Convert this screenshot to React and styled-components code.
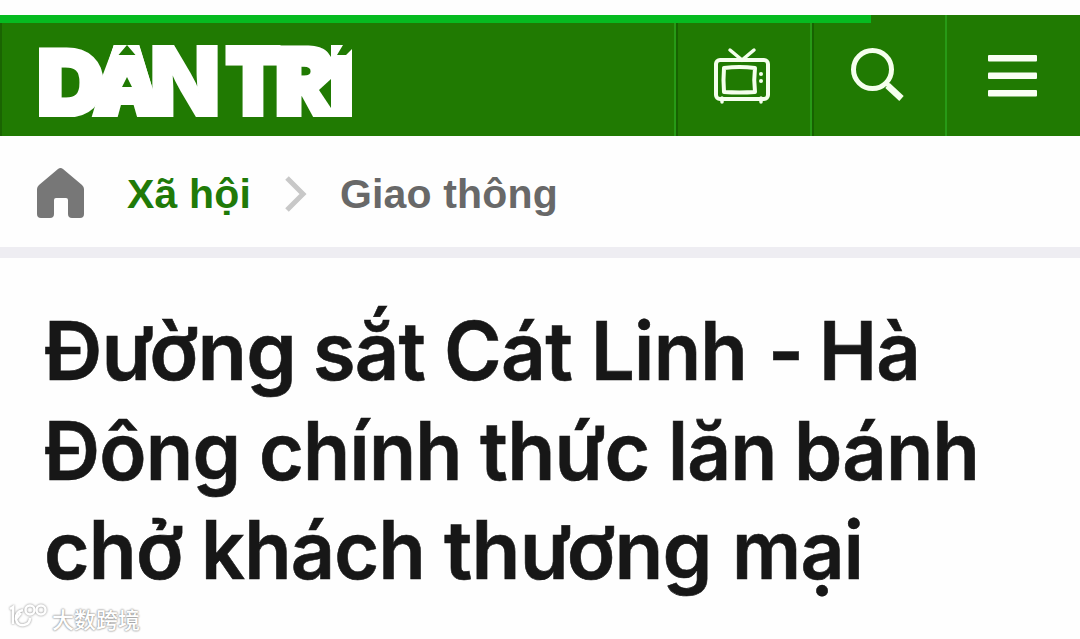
import styled, { createGlobalStyle } from "styled-components";

const GlobalStyle = createGlobalStyle`
  * {
    box-sizing: border-box;
  }
  body {
    margin: 0;
    background: #fefefe;
    overflow: hidden;
  }
`;

const Page = styled.div`
  position: relative;
  width: 1080px;
  height: 639px;
  padding-top: 15px;
  overflow: hidden;
`;
const Header = styled.header`
  position: relative;
  display: flex;
  height: 121px;
  background: #207a02;
  border-left: 2px solid #1a6402;
`;
const Progress = styled.div`
  position: absolute;
  top: 0;
  left: -2px;
  width: 871px;
  height: 8px;
  background: #06bb20;
`;
const LogoLink = styled.div`
  flex: 1;
  padding: 29px 0 0 36px;
`;
const HeaderButton = styled.div`
  display: flex;
  width: ${({ $width }) => $width}px;
  padding-top: ${({ $top }) => $top}px;
  padding-left: ${({ $left }) => $left}px;
  border-left: 2px solid #279a16;
  box-shadow: ${({ $shadow }) => ($shadow ? "inset 2px 0 #176201" : "none")};
`;
const Breadcrumb = styled.nav`
  display: flex;
  height: 122px;
  padding: 32px 0 0 37px;
  border-bottom: 11px solid #eeedf2;
  font: bold 41px/52px "Liberation Sans", Arial, sans-serif;
  letter-spacing: 0.15px;
  white-space: nowrap;
`;
const Crumb = styled.span`
  width: ${({ $width }) => $width}px;
  color: ${({ $active }) => ($active ? "#207a08" : "#686868")};
`;
const HomeIcon = styled.svg`
  margin-right: 43px;
`;
const Chevron = styled.svg`
  margin: 8px 33px 0 0;
`;
const Title = styled.h1`
  margin: 43px 0 0 43.5px;
  color: #171717;
  font: 600 80.5px/99.5px Inter, sans-serif;
  letter-spacing: -0.8px;
  -webkit-text-stroke: 0.6px #171717;
  white-space: nowrap;
`;
const Line = styled.span`
  display: flex;
`;
const Word = styled.span`
  width: ${({ $width }) => $width}px;
  transform: scaleX(${({ $scale }) => $scale});
  transform-origin: left;
`;
const Watermark = styled.div`
  position: absolute;
  left: 8px;
  top: 601px;
  display: flex;
  color: #fff;
  font: 500 22px/34px "Noto Sans CJK SC", sans-serif;
  text-shadow: 0 0 2px #888, 0 0 2px #999;
`;
const WatermarkIcon = styled.svg`
  margin-right: 4px;
  filter: drop-shadow(0 0 1px #888);
`;

const letters = [
  { char: "D", x: 36, width: 68, cap: 70, stroke: 5 },
  { char: "N", x: 149, width: 72, cap: 72, stroke: 2 },
  { char: "T", x: 226, width: 54, cap: 72, stroke: 6 },
  { char: "R", x: 276, width: 60, cap: 72, stroke: 7 },
  { char: "Í", x: 326, width: 31, cap: 72, stroke: 0 },
];

const title = [
  [
    ["Đường", 269, 1.005],
    ["sắt", 131, 0.963],
    ["Cát", 147, 0.973],
    ["Linh", 177, 0.964],
    ["-", 51, 0.96],
    ["Hà", 110, 0.966],
  ],
  [
    ["Đông", 215, 0.965],
    ["chính", 221, 0.957],
    ["thức", 188, 0.977],
    ["lăn", 126, 0.95],
    ["bánh", 200, 0.962],
  ],
  [
    ["chở", 157, 0.972],
    ["khách", 243, 0.959],
    ["thương", 288, 0.993],
    ["mại", 140, 0.954],
  ],
];

const LogoLetter = ({ char, x, width, cap, stroke }) => (
  <text
    x={x}
    y={117 - stroke / 2}
    fontSize={(cap - stroke) / 0.727}
    strokeWidth={stroke}
    textLength={width}
    lengthAdjust="spacingAndGlyphs"
  >
    {char}
  </text>
);

const Logo = () => (
  <svg width="316" height="74" viewBox="38 44 316 74">
    <clipPath id="logo">
      <rect x="39" y="45" width="313" height="72" />
    </clipPath>
    <g
      clipPath="url(#logo)"
      fill="#fff"
      stroke="#fff"
      fontFamily="Inter, sans-serif"
      fontWeight="900"
    >
      <LogoLetter char="Â" x={95} width={65} cap={72} stroke={8} />
      {/* trims the circumflex to the slopes of the A */}
      <path
        d="M94 44h20l-14 39h-6zM139 44h16v46h-2z"
        fill="#207a02"
        stroke="none"
      />
      {letters.map((letter) => (
        <LogoLetter key={letter.char} {...letter} />
      ))}
    </g>
    {/* accents cut into the caps */}
    <path d="M114 45h25l14 45v15h-14-28-12v-20z" fill="#fff" />
    <path d="M127 45l8.500 10h-17zM127 77l5 10h-10z" fill="#207a02" />
    <path d="M331 79l-12 11 12 18z" fill="#207a02" />
    <path d="M331 56l-4-5 4-6h21v15h-21z" fill="#fff" />
    <path d="M319 44h12v13q-5-8-12-13zM343 45h9v4l-6 6h-9z" fill="#207a02" />
  </svg>
);

const TvIcon = () => (
  <svg width="58" height="60" fill="none" stroke="#f5ffed" strokeWidth="4">
    <path
      d="M17 4l12 10L41 4M9 52v4M48 52v4"
      strokeLinecap="round"
      strokeWidth="3.500"
    />
    <rect x="3" y="14" width="52" height="39" rx="4" />
    <path
      d="M11 22q15.500-2 31 0q-1.500 12 0 24q-15.500 1-31 0q-1-12 0-24z"
      strokeLinejoin="round"
    />
    <circle cx="48" cy="28" r="2" fill="#f5ffed" stroke="none" />
    <circle cx="48" cy="35" r="2" fill="#f5ffed" stroke="none" />
  </svg>
);

const SearchIcon = () => (
  <svg width="56" height="56" fill="none" stroke="#f5ffed">
    <circle cx="23.500" cy="22.500" r="19" strokeWidth="5" />
    <path d="M36 35l5 5" strokeWidth="4" />
    <path d="M38.500 38.500l14 13" strokeWidth="6.500" />
  </svg>
);

const MenuIcon = () => (
  <svg width="49" height="42" fill="#f9fff4">
    <rect width="49" height="6.500" rx="1" />
    <rect y="17.500" width="49" height="6.500" rx="1" />
    <rect y="35" width="49" height="6.500" rx="1" />
  </svg>
);

export default function App() {
  return (
    <>
      <GlobalStyle />
      <Page>
        <Header>
          <LogoLink>
            <Logo />
          </LogoLink>
          <HeaderButton $width={136} $top={31} $left={37} $shadow>
            <TvIcon />
          </HeaderButton>
          <HeaderButton $width={135} $top={32} $left={37} $shadow>
            <SearchIcon />
          </HeaderButton>
          <HeaderButton $width={135} $top={40} $left={41}>
            <MenuIcon />
          </HeaderButton>
          <Progress />
        </Header>
        <Breadcrumb>
          <HomeIcon width="47" height="50" viewBox="0 0 47 50">
            <path
              d="M21 1q2.500-2 5 0l19 16q2 2 2 4v25q0 4-4 4H35q-4 0-4-4V32q0-2-2-2H19q-2 0-2 2v14q0 4-4 4H4q-4 0-4-4V21q0-2 2-4z"
              fill="#777"
            />
          </HomeIcon>
          <Crumb $active $width={158}>
            Xã hội
          </Crumb>
          <Chevron width="22" height="36" fill="none">
            <path d="M2 2l16 16L2 34" stroke="#c8c8c8" strokeWidth="5" />
          </Chevron>
          <Crumb>Giao thông</Crumb>
        </Breadcrumb>
        <Title>
          {title.map((words) => (
            <Line key={words[0][0]}>
              {words.map(([word, width, scale]) => (
                <Word key={word} $width={width} $scale={scale}>
                  {word}
                </Word>
              ))}
            </Line>
          ))}
        </Title>
        <Watermark>
          <WatermarkIcon
            width="40"
            height="32"
            fill="none"
            stroke="#fff"
            strokeWidth="2.500"
          >
            <path d="M2 8l3-2v17M15 9q-8 2-7 9t8 6q6-1 6-7M8 18l5-6" />
            <circle cx="22" cy="9" r="4.500" />
            <circle cx="33" cy="9" r="4.500" />
          </WatermarkIcon>
          大数跨境
        </Watermark>
      </Page>
    </>
  );
}
